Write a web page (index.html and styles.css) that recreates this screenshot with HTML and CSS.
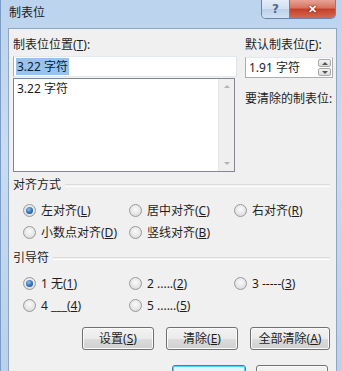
FILE: index.html
```html
<!DOCTYPE html>
<html lang="zh-CN">
<head>
  <meta charset="UTF-8">
  <title>制表位</title>
  <link rel="stylesheet" href="styles.css">
</head>
<body>
  <div class="window">
    <div class="titlebar">
      <span class="title">制表位</span>
      <div class="caption">
        <span class="cap-btn help">?</span>
        <span class="cap-btn close">&#x2715;</span>
      </div>
    </div>

    <div class="client">
      <div class="top">
        <div class="col-left">
          <div class="lbl">制表位位置(<u>T</u>):</div>
          <div class="textbox"><span class="sel">3.22 字符</span></div>
          <div class="listbox">
            <div class="items">3.22 字符</div>
            <div class="vscroll">
              <span class="arr up"></span>
              <span class="arr down"></span>
            </div>
          </div>
        </div>
        <div class="col-right">
          <div class="lbl">默认制表位(<u>F</u>):</div>
          <div class="spin">
            <span class="spin-val">1.91 字符</span>
            <div class="spin-btns">
              <span class="sb"><i class="tri-up"></i></span>
              <span class="sb"><i class="tri-down"></i></span>
            </div>
          </div>
          <div class="lbl clear-lbl">要清除的制表位:</div>
        </div>
      </div>

      <div class="group">
        <div class="group-head"><span>对齐方式</span></div>
        <div class="radios">
          <label class="radio on"><i></i><span>左对齐(<u>L</u>)</span></label>
          <label class="radio"><i></i><span>居中对齐(<u>C</u>)</span></label>
          <label class="radio"><i></i><span>右对齐(<u>R</u>)</span></label>
          <label class="radio"><i></i><span>小数点对齐(<u>D</u>)</span></label>
          <label class="radio"><i></i><span>竖线对齐(<u>B</u>)</span></label>
        </div>
      </div>

      <div class="group second">
        <div class="group-head"><span>引导符</span></div>
        <div class="radios">
          <label class="radio on"><i></i><span>1 无(<u>1</u>)</span></label>
          <label class="radio"><i></i><span>2 .....(<u>2</u>)</span></label>
          <label class="radio"><i></i><span>3 -----(<u>3</u>)</span></label>
          <label class="radio"><i></i><span>4 ___(<u>4</u>)</span></label>
          <label class="radio"><i></i><span>5 ......(<u>5</u>)</span></label>
        </div>
      </div>

      <div class="btn-row">
        <button class="btn">设置(<u>S</u>)</button>
        <button class="btn">清除(<u>E</u>)</button>
        <button class="btn wide">全部清除(<u>A</u>)</button>
      </div>

      <div class="btn-row last">
        <button class="btn default" aria-label="确定"></button>
        <button class="btn" aria-label="取消"></button>
      </div>
    </div>
  </div>
</body>
</html>
```

FILE: styles.css
```css
body {
  margin: 0;
  font-family: "Noto Sans", "Noto Sans CJK SC", sans-serif;
  font-size: 12px;
  color: #1e1e1e;
  background: #fff;
  overflow: hidden;
}

u {
  text-decoration: underline;
  text-underline-offset: 1px;
}

.window {
  width: 342px;
  height: 371px;
  box-sizing: border-box;
  padding: 0 5px 0 7px;
  background: linear-gradient(180deg, #bcd3ee 0%, #c8dcf2 40%, #b9d1ec 100%);
  border-left: 1px solid #7b9cc4;
  overflow: hidden;
}

.titlebar {
  height: 28px;
  display: flex;
  justify-content: space-between;
  align-items: flex-start;
  margin-left: -7px;
  margin-right: -5px;
  padding-left: 8px;
  padding-right: 6px;
}

.title {
  line-height: 26px;
  font-size: 12px;
  color: #1a1a1a;
}

.caption {
  display: flex;
  height: 19px;
  margin-top: -1px;
  border: 1px solid #6b84a6;
  border-top: none;
  border-radius: 0 0 5px 5px;
  overflow: hidden;
}

.cap-btn {
  display: flex;
  align-items: center;
  justify-content: center;
  height: 19px;
}

.help {
  width: 27px;
  background: linear-gradient(180deg, #e6eef8 0%, #d2e0f1 50%, #bccfe7 51%, #cfe0f3 100%);
  border-right: 1px solid #6b84a6;
  color: #50698c;
  font-weight: bold;
  font-size: 12px;
  font-family: "DejaVu Sans", sans-serif;
}

.close {
  width: 45px;
  background: linear-gradient(180deg, #e9a99c 0%, #d77563 45%, #c5412c 55%, #d36a4f 100%);
  color: #fff;
  font-size: 11px;
  font-weight: bold;
  text-shadow: 0 0 2px #6a1a10, 0 0 1px #6a1a10;
}

.client {
  height: 343px;
  background: #f0f0f0;
  border: 1px solid #8fa6c2;
  border-bottom: none;
  box-sizing: border-box;
  padding: 8px 0 0 4px;
}

.lbl {
  line-height: 16px;
  height: 16px;
  white-space: nowrap;
}

.top {
  display: flex;
  gap: 8px;
}

.col-left {
  width: 224px;
}

.textbox {
  margin-top: 3px;
  height: 21px;
  box-sizing: border-box;
  border: 1px solid #abadb3;
  border-top-color: #e3e9ef;
  border-right-color: #e2e3ea;
  border-bottom-color: #e3e9ef;
  background: #fff;
  padding: 2px 2px;
  line-height: 15px;
}

.sel {
  background: #99c3ec;
  color: #102030;
  padding: 0 1px;
}

.listbox {
  margin-top: 1px;
  height: 94px;
  box-sizing: border-box;
  border: 1px solid #828790;
  background: #fff;
  display: flex;
  width: 222px;
}

.items {
  flex: 1;
  padding: 2px 3px;
  line-height: 16px;
}

.vscroll {
  width: 16px;
  background: #efefef;
  border-left: 1px solid #e6e6e6;
  display: flex;
  flex-direction: column;
  justify-content: space-between;
  align-items: center;
  padding: 6px 0;
  box-sizing: border-box;
}

.arr {
  width: 0;
  height: 0;
  border-left: 3px solid transparent;
  border-right: 3px solid transparent;
}

.arr.up {
  border-bottom: 3px solid #b4b4b4;
}

.arr.down {
  border-top: 3px solid #b4b4b4;
}

.col-right {
  width: 90px;
}

.spin {
  margin-top: 4px;
  height: 21px;
  width: 88px;
  box-sizing: border-box;
  border: 1px solid #abadb3;
  border-top-color: #e3e9ef;
  background: #fff;
  display: flex;
  justify-content: space-between;
}

.spin-val {
  padding: 2px 0 0 3px;
  line-height: 15px;
}

.spin-btns {
  width: 13px;
  display: flex;
  flex-direction: column;
  gap: 1px;
  padding: 1px 1px 1px 0;
}

.sb {
  flex: 1;
  display: flex;
  align-items: center;
  justify-content: center;
  background: linear-gradient(180deg, #f4f4f4, #dcdcdc);
  border: 1px solid #a8a8a8;
  border-radius: 2px;
}

.tri-up,
.tri-down {
  width: 0;
  height: 0;
  border-left: 3px solid transparent;
  border-right: 3px solid transparent;
}

.tri-up {
  border-bottom: 3px solid #555;
}

.tri-down {
  border-top: 3px solid #555;
}

.clear-lbl {
  margin-top: 13px;
}

.group {
  margin-top: 5px;
}

.group.second {
  margin-top: 7px;
}

.group-head {
  display: flex;
  align-items: center;
  gap: 4px;
  height: 16px;
  line-height: 16px;
  padding-right: 6px;
}

.group-head::after {
  content: "";
  flex: 1;
  height: 1px;
  border-top: 1px solid #dcdcdc;
  border-bottom: 1px solid #fff;
  margin-top: 1px;
}

.radios {
  margin-top: 6px;
  display: grid;
  grid-template-columns: 106px 105px 90px;
  padding-left: 10px;
}

.radio {
  height: 22px;
  display: flex;
  align-items: center;
  gap: 5px;
  white-space: nowrap;
}

.radio i {
  width: 11px;
  height: 11px;
  border-radius: 50%;
  border: 1px solid #9a9a9a;
  background: radial-gradient(circle at 50% 40%, #fafafa 0%, #e6e6e6 55%, #d2d2d2 100%);
  box-sizing: content-box;
  position: relative;
}

.radio.on i::after {
  content: "";
  position: absolute;
  left: 2px;
  top: 2px;
  width: 7px;
  height: 7px;
  border-radius: 50%;
  background: radial-gradient(circle at 40% 35%, #8fc1ee 0%, #2f6fb0 55%, #1d4a7e 100%);
}

.btn-row {
  display: flex;
  justify-content: flex-end;
  gap: 12px;
  padding-right: 6px;
  margin-top: 11px;
}

.btn-row.last {
  margin-top: 15px;
  gap: 10px;
  padding-right: 8px;
}

.btn {
  width: 72px;
  height: 23px;
  padding: 0;
  font: inherit;
  color: #1e1e1e;
  border: 1px solid #707070;
  border-radius: 3px;
  background: linear-gradient(180deg, #f2f2f2 0%, #ebebeb 50%, #dddddd 51%, #cfcfcf 100%);
  box-shadow: inset 0 0 0 1px #fbfbfb;
  line-height: 20px;
}

.btn.wide {
  width: 80px;
}

.btn.default {
  width: 74px;
  border-color: #3c7fb1;
  box-shadow: inset 0 0 0 1px #48d8fb;
  background: linear-gradient(180deg, #eaf6fd 0%, #d9f0fc 50%, #bee6fd 51%, #a7d9f5 100%);
}
```
